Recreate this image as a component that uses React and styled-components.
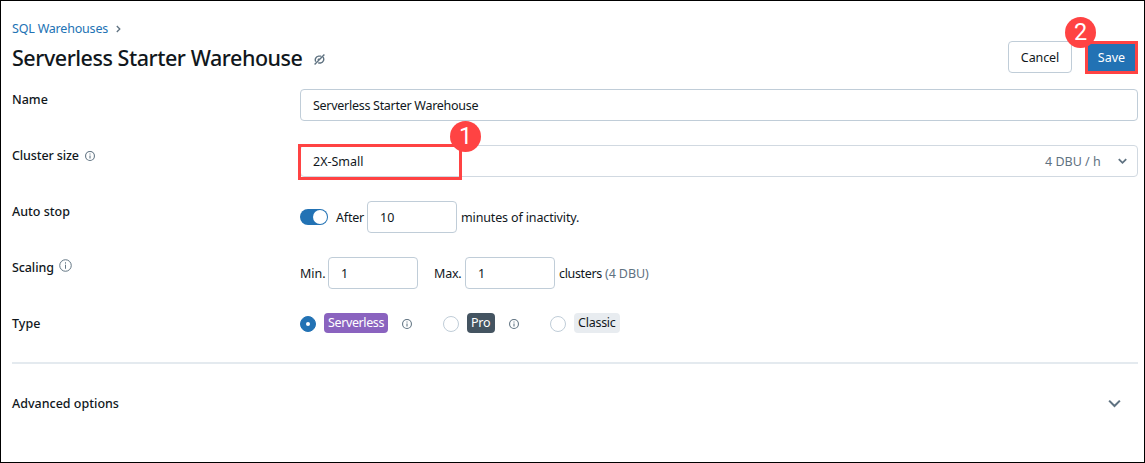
import React from "react";
import styled, { createGlobalStyle, css } from "styled-components";

const Global = createGlobalStyle`
  * { box-sizing: border-box; }
  html, body { margin: 0; padding: 0; background: #fff; }
  body { font-family: "Noto Sans", "Open Sans", sans-serif; font-size: 12.5px; line-height: 20px; color: #11171c; }
`;

const Frame = styled.main`
  width: 1145px;
  height: 463px;
  border: 1px solid #000;
  padding: 17px 6px 0 11px;
  background: #fff;
  overflow: hidden;
`;

const Text = styled.span`
  display: block;
  flex: none;
  white-space: nowrap;
  padding-top: 1px;
  line-height: 21px;
  width: ${(p) => (p.$w ? `${p.$w}px` : "auto")};
  letter-spacing: ${(p) => p.$track || 0}px;
  color: ${(p) => p.$color || "inherit"};
`;

const Breadcrumb = styled.nav`
  display: flex;
  align-items: center;
  height: 20px;
  gap: 7px;
`;

const Header = styled.header`
  display: flex;
  align-items: center;
  height: 38px;
`;

const Title = styled.h1`
  margin: 0;
  padding-top: 2px;
  width: 302px;
  font-size: 21.5px;
  font-weight: 500;
  line-height: 28px;
  letter-spacing: -0.46px;
  white-space: nowrap;
`;

const Actions = styled.div`
  display: flex;
  gap: 13px;
  margin-left: auto;
`;

const Anchor = styled.div`
  position: relative;
`;

const Button = styled.button`
  display: flex;
  align-items: center;
  justify-content: center;
  width: ${(p) => p.$w}px;
  height: 32px;
  padding: 0;
  border: 1px solid ${(p) => (p.$primary ? "#2272b4" : "#c0cdd8")};
  border-radius: 4px;
  background: ${(p) => (p.$primary ? "#2272b4" : "#fff")};
  color: ${(p) => (p.$primary ? "#fff" : "#11171c")};
  font: inherit;
`;

const Highlight = styled.div`
  position: absolute;
  left: ${(p) => p.$x}px;
  top: ${(p) => p.$y}px;
  width: ${(p) => p.$w}px;
  height: ${(p) => p.$h}px;
  border: 3px solid #ff4343;
`;

const Marker = styled.div`
  position: absolute;
  left: ${(p) => p.$x}px;
  top: ${(p) => p.$y}px;
  width: 31px;
  height: 31px;
  border-radius: 50%;
  background: #ff4343;
  color: #fff;
  font: 23.5px/31px Roboto, sans-serif;
  text-align: center;
`;

const Form = styled.section`
  display: flex;
  flex-direction: column;
  gap: 24px;
  padding-top: 13px;
`;

const Row = styled.div`
  display: grid;
  grid-template-columns: 288px 1fr;
  height: 32px;
`;

const Label = styled.div`
  display: flex;
  align-items: center;
  height: 20px;
  font-weight: 500;
`;

const field = css`
  border: 1px solid #c0cdd8;
  border-radius: 4px;
  background: #fff;
  display: flex;
  align-items: center;
  height: 32px;
`;

const Input = styled.div`
  ${field}
  width: ${(p) => (p.$w ? `${p.$w}px` : "100%")};
  padding: 0 12px;
`;

const Select = styled.div`
  ${field}
  position: relative;
  justify-content: space-between;
  padding: 0 10px 0 12px;
  border-color: #d1d9e1;
`;

const Trailing = styled.div`
  display: flex;
  align-items: center;
  gap: 16px;
`;

const Controls = styled.div`
  display: flex;
  align-items: center;
  height: 32px;
`;

const Gap = styled.span`
  flex: none;
  width: ${(p) => p.$w}px;
`;

const Switch = styled.div`
  width: 28px;
  height: 16px;
  padding: 1px;
  border-radius: 8px;
  background: #2272b4;
  display: flex;
  justify-content: flex-end;
  &::after {
    content: "";
    width: 14px;
    height: 14px;
    border-radius: 50%;
    background: #fff;
  }
`;

const RadioGroup = styled.div`
  display: flex;
  align-items: center;
  height: 20px;
`;

const Radio = styled.span`
  flex: none;
  display: flex;
  align-items: center;
  justify-content: center;
  width: 16px;
  height: 16px;
  margin: 1px 8px 0 0;
  border: 1px solid ${(p) => (p.$on ? "#2272b4" : "#c0cdd8")};
  border-radius: 50%;
  background: ${(p) => (p.$on ? "#2272b4" : "#fff")};
  &::after {
    content: "";
    width: 4px;
    height: 4px;
    border-radius: 50%;
    background: #fff;
  }
`;

const Tag = styled.span`
  flex: none;
  width: ${(p) => p.$w}px;
  height: 20px;
  padding-left: 4px;
  border-radius: 4px;
  background: ${(p) => p.$bg};
  color: ${(p) => p.$fg};
  ${Text} {
    padding-top: 0;
    line-height: 20px;
  }
`;

const Divider = styled.hr`
  height: 2px;
  margin: 17px 0 0;
  border: 0;
  background: #e4eaef;
`;

const Advanced = styled.div`
  display: flex;
  align-items: center;
  justify-content: space-between;
  height: 20px;
  margin-top: 29px;
  padding-right: 17px;
  font-weight: 500;
`;

const Icon = styled.svg`
  display: block;
  flex: none;
  margin-top: ${(p) => p.$dy || 0}px;
  fill: none;
  stroke: #5f7281;
`;

const Info = ({ size = 10, thin, dy = 1 }) => (
  <Icon width={size} height={size} viewBox="0 0 16 16" strokeWidth={thin ? 1.2 : 1.7} $dy={dy}>
    <circle cx="8" cy="8" r="7.1" />
    <path d="M8 7v5M8 4v1.7" />
  </Icon>
);

const Chevron = ({ width = 9, height = 6.75, stroke = 1.6 }) => (
  <Icon width={width} height={height} viewBox="0 0 8 6" strokeWidth={stroke} $dy={1}>
    <path d="M.7 1 4 4.3 7.3 1" />
  </Icon>
);

const Unlinked = () => (
  <Icon width="11" height="11" viewBox="0 0 11 11" strokeWidth="1.4" $dy={5}>
    <path d="M10.4.5.6 10.5M1.7 7.6C.5 5.2 2 2.5 4.6 2.1h2.6M9.1 3.2c1.5 2.3.2 5.3-2.5 5.8H4.2M3.8 5.9 5.4 4.7" />
  </Icon>
);

export default function App() {
  return (
    <>
      <Global />
      <Frame>
        <Breadcrumb>
          <Text $w={97} $track={-0.2} $color="#2272b4">SQL Warehouses</Text>
          <Icon width="5" height="8" viewBox="0 0 5 8" strokeWidth="1.3" $dy={1}>
            <path d="M.8 1 3.8 4 .8 7" />
          </Icon>
        </Breadcrumb>
        <Header>
          <Title>Serverless Starter Warehouse</Title>
          <Unlinked />
          <Actions>
            <Button $w={64}><Text $track={-0.1}>Cancel</Text></Button>
            <Anchor>
              <Button $w={53} $primary><Text>Save</Text></Button>
              <Highlight $x={0} $y={0} $w={53} $h={33} />
              <Marker $x={-20} $y={-24}>2</Marker>
            </Anchor>
          </Actions>
        </Header>
        <Form>
          <Row>
            <Label><Text>Name</Text></Label>
            <Input><Text $track={-0.28}>Serverless Starter Warehouse</Text></Input>
          </Row>
          <Row>
            <Label><Text $w={73} $track={-0.12}>Cluster size</Text><Info /></Label>
            <Select>
              <Text>2X-Small</Text>
              <Trailing>
                <Text $w={57} $color="#5f7281">4 DBU / h</Text>
                <Chevron />
              </Trailing>
              <Highlight $x={-3} $y={-2} $w={164} $h={36} />
              <Marker $x={149} $y={-25}>1</Marker>
            </Select>
          </Row>
          <Row>
            <Label><Text>Auto stop</Text></Label>
            <Controls>
              <Switch />
              <Gap $w={8} />
              <Text $w={31} $track={-0.2}>After</Text>
              <Input $w={90}><Text>10</Text></Input>
              <Gap $w={4} />
              <Text $track={-0.14}>minutes of inactivity.</Text>
            </Controls>
          </Row>
          <Row>
            <Label><Text $w={47} $track={-0.1}>Scaling</Text><Info size={13} thin dy={-4} /></Label>
            <Controls>
              <Text $w={28}>Min.</Text>
              <Input $w={90}><Text>1</Text></Input>
              <Gap $w={16} />
              <Text $w={31} $track={-0.2}>Max.</Text>
              <Input $w={90}><Text>1</Text></Input>
              <Gap $w={4} />
              <Text $w={46} $track={-0.35}>clusters</Text>
              <Text $color="#5f7281" $track={-0.1}>(4 DBU)</Text>
            </Controls>
          </Row>
          <Row>
            <Label><Text>Type</Text></Label>
            <RadioGroup>
              <Radio $on />
              <Tag $w={64} $bg="#8a63bf" $fg="#fff"><Text $track={-0.38}>Serverless</Text></Tag>
              <Gap $w={14} />
              <Info />
              <Gap $w={31} />
              <Radio />
              <Tag $w={28} $bg="#445461" $fg="#fff"><Text $track={-0.2}>Pro</Text></Tag>
              <Gap $w={14} />
              <Info />
              <Gap $w={31} />
              <Radio />
              <Tag $w={46} $bg="#e8ecf0" $fg="#11171c"><Text $track={-0.25}>Classic</Text></Tag>
            </RadioGroup>
          </Row>
        </Form>
        <Divider />
        <Advanced>
          <Text>Advanced options</Text>
          <Chevron width={13} height={9.75} stroke={1.3} />
        </Advanced>
      </Frame>
    </>
  );
}
